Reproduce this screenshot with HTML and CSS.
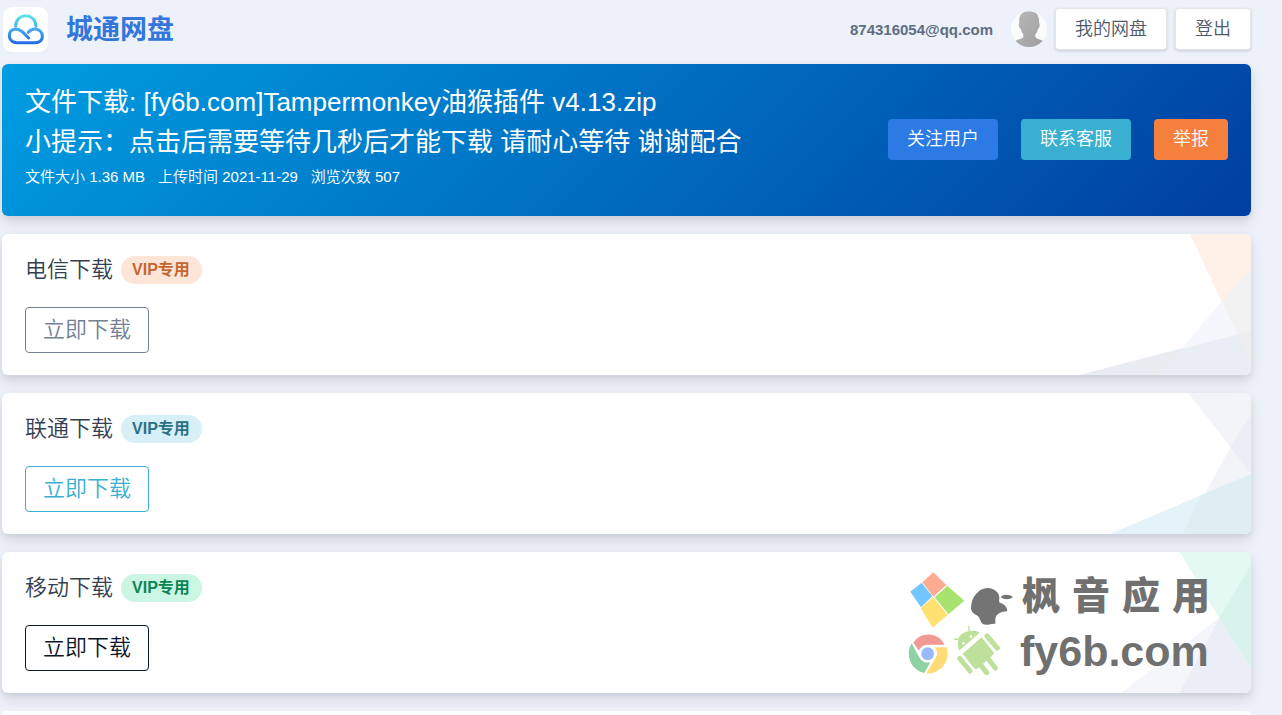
FILE: index.html
```html
<!DOCTYPE html>
<html lang="zh-CN">
<head>
<meta charset="utf-8">
<title>城通网盘</title>
<link rel="stylesheet" href="styles.css">
</head>
<body>
<div class="page">
  <header class="topbar">
    <a class="brand" href="#">
      <svg class="brand-logo" viewBox="0 0 135 135" aria-hidden="true">
        <defs>
          <linearGradient id="cloudTop" x1="0" y1="0" x2="0" y2="1"><stop offset="0" stop-color="#5fe3e6"/><stop offset="1" stop-color="#45b8f0"/></linearGradient>
          <linearGradient id="cloudBase" x1="0" y1="0" x2="0" y2="1"><stop offset="0" stop-color="#45aaf2"/><stop offset="1" stop-color="#1f6ee6"/></linearGradient>
        </defs>
        <rect width="135" height="135" rx="28" fill="#fff"/>
        <g fill="none" stroke-width="9" stroke-linecap="round">
          <path d="M38 58C38 16 98 15 99 58" stroke="url(#cloudTop)"/>
          <path d="M77 93L64 80C50 64 22 60 19 84C19 100 30 107 42 107H98C112 107 119 97 118 86C116 66 91 59 76 76" stroke="url(#cloudBase)"/>
        </g>
      </svg>
      <span class="brand-name">城通网盘</span>
    </a>
    <div class="account">
      <span class="account-mail">874316054@qq.com</span>
      <svg class="avatar" viewBox="0 0 108 108" aria-hidden="true">
        <defs>
          <clipPath id="avatarClip"><circle cx="54" cy="54" r="54"/></clipPath>
          <linearGradient id="avatarShade" x1="0" y1="0" x2="1" y2="1"><stop offset="0" stop-color="#b9b9b9"/><stop offset="1" stop-color="#9e9e9e"/></linearGradient>
        </defs>
        <g clip-path="url(#avatarClip)">
          <rect width="108" height="108" fill="#fbfbfb"/>
          <path d="M54 1C77 1 86 14 84 36C88 36 86 52 81 53C79 62 76 66 73 70V78C76 86 95 84 100 94V108H8V94C14 84 34 86 37 78V70C33 66 31 61 29 53C23 52 22 37 25 36C22 14 32 1 54 1Z" fill="url(#avatarShade)"/>
        </g>
      </svg>
      <button class="btn btn-plain" type="button">我的网盘</button>
      <button class="btn btn-plain" type="button">登出</button>
    </div>
  </header>

  <main class="stack">
    <section class="banner">
      <div class="banner-info">
        <h1 class="banner-title">文件下载: [fy6b.com]Tampermonkey油猴插件 v4.13.zip<br>小提示：点击后需要等待几秒后才能下载 请耐心等待 谢谢配合</h1>
        <p class="banner-meta"><span>文件大小 1.36 MB</span><span>上传时间 2021-11-29</span><span>浏览次数 507</span></p>
      </div>
      <div class="banner-actions">
        <button class="btn btn-blue" type="button">关注用户</button>
        <button class="btn btn-cyan" type="button">联系客服</button>
        <button class="btn btn-orange" type="button">举报</button>
      </div>
    </section>

    <section class="card">
      <svg class="card-art" viewBox="0 0 180 141" preserveAspectRatio="none" aria-hidden="true">
        <path d="M119 0H180V130Z" fill="#fff0e8"/>
        <path d="M180 35L151 67L110 115L87 141H180Z" fill="#f5f7fc"/>
        <path d="M180 35L151 67L180 130Z" fill="#f3f2f2"/>
        <path d="M9 141L180 97V141Z" fill="#e9edf5"/>
        <path d="M9 141L112 114L87 141Z" fill="#e9ecf1"/>
        <path d="M166 101L180 97V130Z" fill="#eeedf0"/>
      </svg>
      <h2 class="card-title">电信下载 <span class="badge badge-orange">VIP专用</span></h2>
      <button class="btn-download tone-gray" type="button">立即下载</button>
    </section>

    <section class="card">
      <svg class="card-art" viewBox="0 0 180 141" preserveAspectRatio="none" aria-hidden="true">
        <path d="M117 0H180V80Z" fill="#f3f4f8"/>
        <path d="M180 22L159 55L112 141H180Z" fill="#f3f4f8"/>
        <path d="M180 22L159 54L180 80Z" fill="#ebeef5"/>
        <path d="M39 141L180 81V141Z" fill="#e4f2f9"/>
        <path d="M130 102L180 81V141H112Z" fill="#deeef3"/>
      </svg>
      <h2 class="card-title">联通下载 <span class="badge badge-cyan">VIP专用</span></h2>
      <button class="btn-download tone-cyan" type="button">立即下载</button>
    </section>

    <section class="card">
      <svg class="card-art" viewBox="0 0 180 141" preserveAspectRatio="none" aria-hidden="true">
        <path d="M109 0H180V117L148 66Z" fill="#e3f9f1"/>
        <path d="M180 13L148 66L180 117Z" fill="#d9f3ec"/>
        <path d="M148 66L180 117V141H108Z" fill="#ebeef6"/>
        <path d="M148 66L50 141H108Z" fill="#f5f6fb"/>
      </svg>
      <h2 class="card-title">移动下载 <span class="badge badge-green">VIP专用</span></h2>
      <button class="btn-download tone-dark" type="button">立即下载</button>
      <div class="watermark">
        <svg class="watermark-icons" viewBox="54 75 318 318" aria-hidden="true">
          <path d="M130 82L169 120L130 155L97 112Z" fill="#ffab92"/>
          <path d="M95 113L127 154L93 187L61 140Z" fill="#72c5ff"/>
          <path d="M172 122L223 167L175 208L134 157Z" fill="#a8e370"/>
          <path d="M129 157L173 209L128 248L92 189Z" fill="#ffe070"/>
          <path d="M243 190C243 155 268 128 294 129C313 130 327 142 328 157C328 163 326 169 329 173C340 175 352 184 352 199C333 199 317 208 316 222V237C304 235 301 240 290 239C274 239 273 230 268 218C262 208 244 208 243 190ZM332 156C340 147 357 147 369 156C358 165 342 165 332 156Z" fill="#747474"/>
          <path d="M70 293A54 54 0 0 1 164 299H113A28 28 0 0 0 87 317Z" fill="#f19993"/>
          <path d="M134 307H170A59 59 0 0 1 109 385L136 340A27 27 0 0 0 134 307Z" fill="#ffdb78"/>
          <path d="M65 295L89 339A27 27 0 0 0 121 352L103 384A59 59 0 0 1 65 295Z" fill="#90d2a4"/>
          <circle cx="113" cy="326" r="19" fill="#98bafa"/>
          <path d="M207 317C199 290 205 272 218 265C236 255 257 255 269 263Z" fill="#bee09b"/>
          <path d="M218 326L275 277L313 325Q305 334 296 342L264 370Q257 375 251 368Z" fill="#bee09b"/>
          <g fill="none" stroke="#bee09b" stroke-width="15" stroke-linecap="round">
            <path d="M209 340L240 378M291 273L322 309M268 355L290 383M291 337L316 369"/>
            <path d="M193 282L208 284M236 245L238 260" stroke-width="4"/>
          </g>
          <circle cx="220" cy="295" r="4" fill="#fff"/><circle cx="243" cy="275" r="4" fill="#fff"/>
        </svg>
        <div class="watermark-text">
          <div class="watermark-name"><span>枫</span><span>音</span><span>应</span><span>用</span></div>
          <div class="watermark-site">fy6b.com</div>
        </div>
      </div>
    </section>

    <section class="card card-next"></section>
  </main>
</div>
</body>
</html>
```
FILE: styles.css
```css
* {
  box-sizing: border-box;
}

body {
  margin: 0;
  background: #edf1f9;
  color: #344050;
  font-family: "Liberation Sans", "Noto Sans CJK SC", sans-serif;
  font-weight: 350;
}

h1, h2, p {
  margin: 0;
  font-weight: inherit;
}

button {
  font: inherit;
  cursor: pointer;
}

.page {
  display: flex;
  flex-direction: column;
  min-height: 100vh;
  padding: 0 31px 0 2px;
}

.topbar {
  display: flex;
  align-items: center;
  justify-content: space-between;
  height: 58px;
  margin-bottom: 6px;
}

.brand {
  display: flex;
  align-items: center;
  gap: 18px;
  padding-left: 1px;
  color: #2c7be5;
  text-decoration: none;
}

.brand-logo {
  width: 45px;
  height: 45px;
}

.brand-name {
  padding-bottom: 3px;
  color: #3376dc;
  font-size: 27px;
  font-weight: 700;
}

.account {
  display: flex;
  align-items: center;
  gap: 8px;
}

.account-mail {
  margin-right: 10px;
  color: #5e6e82;
  font-size: 15px;
  font-weight: 700;
}

.avatar {
  width: 36px;
  height: 36px;
}

.btn {
  height: 41px;
  padding: 0 19px;
  border: 0;
  border-radius: 4px;
  color: #fff;
  font-size: 18px;
  line-height: 40px;
}

.btn-plain {
  height: 42px;
  padding: 0 20px;
  background: #fff;
  color: #4d5969;
  box-shadow: inset 0 0 0 1px rgba(43, 45, 80, .12), 0 1px 3px rgba(43, 45, 80, .2);
}

.btn-blue { background: #2c7be5; }
.btn-cyan { background: #39afd1; }
.btn-orange { background: #f5803e; }

.stack {
  display: flex;
  flex: 1;
  flex-direction: column;
  gap: 18px;
}

.banner {
  display: flex;
  align-items: center;
  justify-content: space-between;
  padding: 18px 23px 24px;
  border-radius: 6px;
  background: linear-gradient(135deg, #009de1, #003fa2);
  box-shadow: 0 7px 14px rgba(65, 69, 88, .12), 0 3px 6px rgba(0, 0, 0, .07);
  color: #fff;
}

.banner-title {
  font-size: 26px;
  font-weight: 400;
  line-height: 40px;
}

.banner-meta {
  display: flex;
  gap: 13px;
  font-size: 15px;
  line-height: 30px;
}

.banner-actions {
  display: flex;
  gap: 23px;
  padding-top: 4px;
}

.card {
  position: relative;
  display: flex;
  flex-direction: column;
  align-items: flex-start;
  gap: 23px;
  padding: 22px 23px;
  border-radius: 6px;
  background: #fff;
  box-shadow: 0 7px 14px rgba(65, 69, 88, .12), 0 3px 6px rgba(0, 0, 0, .07);
}

.card-next {
  flex: 1;
  padding: 0;
  border-radius: 6px 6px 0 0;
  box-shadow: none;
}

.card-art {
  position: absolute;
  top: 0;
  right: 0;
  width: 180px;
  height: 100%;
  border-radius: 0 6px 6px 0;
}

.card-title {
  display: flex;
  align-items: center;
  gap: 8px;
  font-size: 22px;
  line-height: 28px;
}

.badge {
  padding: 0 12px 0 11px;
  border-radius: 14px;
  font-size: 16px;
  font-weight: 700;
}

.badge-orange { background: #fde6d8; color: #c46632; }
.badge-cyan { background: #d7eff6; color: #2a7187; }
.badge-green { background: #ccf6e4; color: #0b8457; }

.btn-download {
  height: 46px;
  padding: 0 17px;
  border: 1px solid;
  border-radius: 4px;
  background: transparent;
  font-size: 22px;
  line-height: 42px;
}

.tone-gray { color: #748194; }
.tone-cyan { color: #39afd1; }
.tone-dark { color: #0b1727; }

.watermark {
  position: absolute;
  top: 18px;
  right: 41px;
  display: flex;
  gap: 6px;
  color: #707070;
  font-weight: 900;
}

.watermark-icons {
  width: 106px;
  height: 106px;
}

.watermark-text {
  width: 190px;
}

.watermark-name {
  display: flex;
  justify-content: space-between;
  padding-left: 2px;
  font-size: 38px;
  line-height: 52px;
}

.watermark-site {
  font-size: 43px;
  line-height: 58px;
}
```
